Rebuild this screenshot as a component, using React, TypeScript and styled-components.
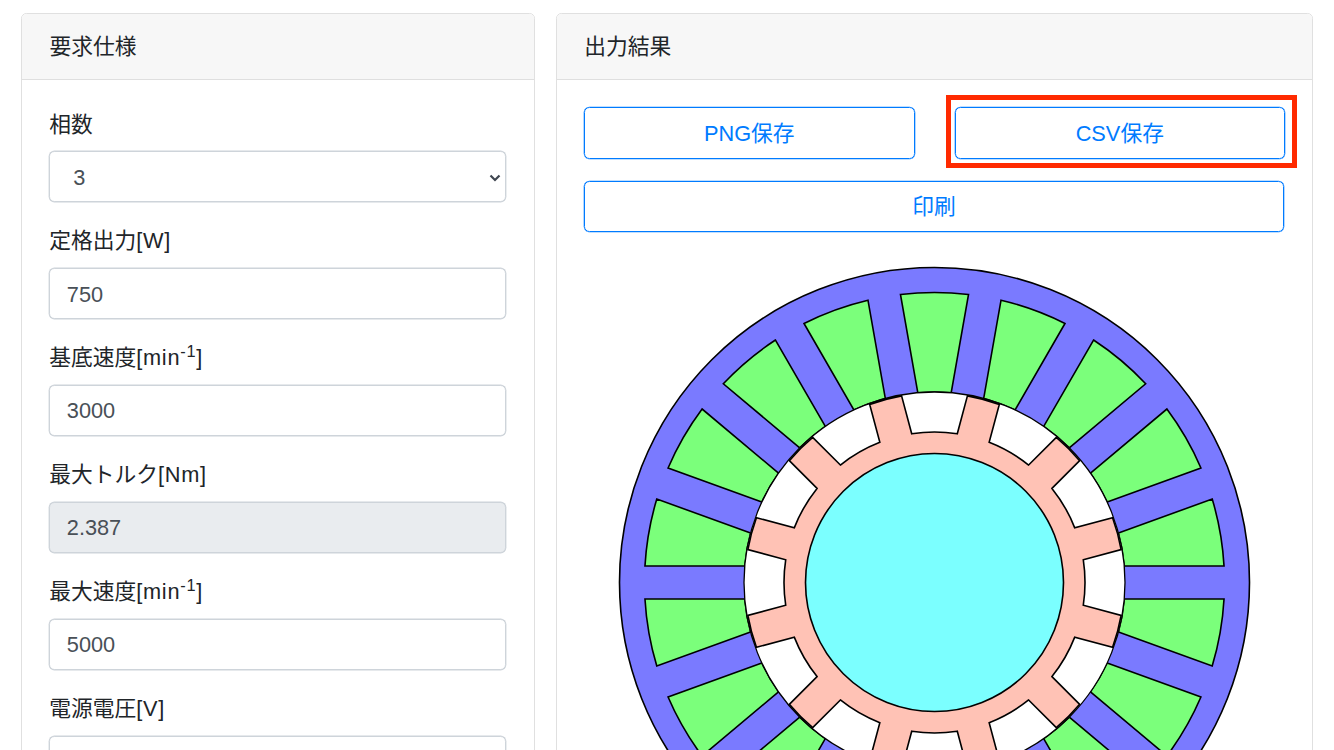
import React from 'react';
import styled, { createGlobalStyle } from 'styled-components';

// motor cross section, sizes in px of the picture
const C = 350.5;
const STATOR_R = 315;
const SLOT_R = 290;
const BORE_R = 190.5;
const ROTOR_R = 189.5;
const YOKE_R = 150.5;
const SHAFT_R = 129;
const HALF_TOOTH = 16.5;

const pt = (deg: number, r: number, offset: number) => {
  const a = (deg * Math.PI) / 180;
  const t = Math.sqrt(r * r - offset * offset);
  const x = C + t * Math.cos(a) - offset * Math.sin(a);
  const y = C - t * Math.sin(a) - offset * Math.cos(a);
  return `${x.toFixed(2)} ${y.toFixed(2)}`;
};

const statorSlot = (center: number) => {
  const lo = center - 10;
  const hi = center + 10;
  return [
    `M${pt(lo, BORE_R, HALF_TOOTH)}`,
    `L${pt(lo, SLOT_R, HALF_TOOTH)}`,
    `A${SLOT_R} ${SLOT_R} 0 0 0 ${pt(hi, SLOT_R, -HALF_TOOTH)}`,
    `L${pt(hi, BORE_R, -HALF_TOOTH)}`,
    `A${BORE_R} ${BORE_R} 0 0 1 ${pt(lo, BORE_R, HALF_TOOTH)}Z`,
  ].join(' ');
};

const rotorPath = () => {
  const parts: string[] = [];
  for (let k = 0; k < 12; k++) {
    const pole = 15 + k * 30;
    const next = pole + 30;
    parts.push(k === 0 ? `M${pt(pole, YOKE_R, -HALF_TOOTH)}` : `L${pt(pole, YOKE_R, -HALF_TOOTH)}`);
    parts.push(`L${pt(pole, ROTOR_R, -HALF_TOOTH)}`);
    parts.push(`A${ROTOR_R} ${ROTOR_R} 0 0 0 ${pt(pole, ROTOR_R, HALF_TOOTH)}`);
    parts.push(`L${pt(pole, YOKE_R, HALF_TOOTH)}`);
    parts.push(`A${YOKE_R} ${YOKE_R} 0 0 0 ${pt(next, YOKE_R, -HALF_TOOTH)}`);
  }
  return parts.join(' ') + 'Z';
};

const slots = Array.from({ length: 18 }, (_, i) => 90 + i * 20);

const MotorDrawing = () => (
  <Drawing viewBox="0 0 701 701">
    <circle cx={C} cy={C} r={STATOR_R} fill="#7a7aff" stroke="#000" strokeWidth="1.6" />
    {slots.map((s) => (
      <path key={s} d={statorSlot(s)} fill="#7bff7b" stroke="#000" strokeWidth="1.6" strokeLinejoin="miter" />
    ))}
    <circle cx={C} cy={C} r={BORE_R} fill="#fff" stroke="#000" strokeWidth="1.3" />
    <path d={rotorPath()} fill="#ffc2b5" stroke="#000" strokeWidth="1.6" />
    <circle cx={C} cy={C} r={SHAFT_R} fill="#7bffff" stroke="#000" strokeWidth="1.6" />
  </Drawing>
);

const App = () => {
  return (
    <Page>
      <GlobalStyle />
      <SpecCard>
        <CardHeader>要求仕様</CardHeader>
        <CardBody>
          <FormGroup>
            <Label>相数</Label>
            <SelectBox>
              <Select defaultValue="3">
                <option value="1">1</option>
                <option value="3">3</option>
              </Select>
              <Chevron viewBox="0 0 12 8">
                <path d="M1.5 1.5 6 6l4.5-4.5" fill="none" stroke="#3f4650" strokeWidth="2.2" />
              </Chevron>
            </SelectBox>
          </FormGroup>
          <FormGroup>
            <Label>定格出力<Unit>[W]</Unit></Label>
            <Input defaultValue="750" />
          </FormGroup>
          <FormGroup>
            <Label>基底速度<Unit>[min<sup>-1</sup>]</Unit></Label>
            <Input defaultValue="3000" />
          </FormGroup>
          <FormGroup>
            <Label>最大トルク<Unit>[Nm]</Unit></Label>
            <Input defaultValue="2.387" disabled />
          </FormGroup>
          <FormGroup>
            <Label>最大速度<Unit>[min<sup>-1</sup>]</Unit></Label>
            <Input defaultValue="5000" />
          </FormGroup>
          <FormGroup>
            <Label>電源電圧<Unit>[V]</Unit></Label>
            <Input defaultValue="200" />
          </FormGroup>
        </CardBody>
      </SpecCard>
      <ResultCard>
        <CardHeader>出力結果</CardHeader>
        <CardBody>
          <ButtonRow>
            <OutlineButton>PNG保存</OutlineButton>
            <Marked>
              <OutlineButton>CSV保存</OutlineButton>
              <RedFrame />
            </Marked>
          </ButtonRow>
          <OutlineButton>印刷</OutlineButton>
          <MotorDrawing />
        </CardBody>
      </ResultCard>
    </Page>
  );
};
export default App;

const GlobalStyle = createGlobalStyle`
  html, body {
    margin: 0;
    height: 750px;
    overflow: hidden;
    background: #fff;
  }
  body {
    font-family: "Liberation Sans", "Noto Sans CJK JP", sans-serif;
    font-size: 21.76px;
    line-height: 1.5;
    color: #212529;
  }
  * {
    box-sizing: border-box;
  }
  sup {
    font-size: 75%;
    line-height: 0;
    position: relative;
    top: -0.5em;
    vertical-align: baseline;
  }
`;

const Page = styled.div`
  display: flex;
  align-items: flex-start;
  gap: 21px;
  padding: 13px 21px 0;
  width: 1334px;
`;

const Card = styled.section`
  border: 1px solid #e0e0e0;
  border-radius: 5.4px;
  background: #fff;
  flex: none;
`;

const SpecCard = styled(Card)`
  width: 513.6px;
`;

const ResultCard = styled(Card)`
  width: 757px;
`;

const CardHeader = styled.div`
  padding: 16.9px 27.2px 15.7px 27.6px;
  background: #f7f7f7;
  border-bottom: 1px solid #dfdfdf;
  border-radius: 4.4px 4.4px 0 0;
`;

const CardBody = styled.div`
  padding: 27.2px;
`;

const FormGroup = styled.div`
  margin-bottom: 22.06px;
`;

const Label = styled.label`
  display: block;
  padding-top: 1.1px;
  margin-bottom: 9.78px;
`;

const Unit = styled.span`
  letter-spacing: 0.75px;
`;

const Input = styled.input`
  display: block;
  width: 100%;
  height: 51.4px;
  padding: 2px 16.6px 0;
  font: inherit;
  color: #495057;
  background: #fff;
  border: 1px solid #ced4da;
  border-radius: 5.4px;
  box-shadow: 0 0 0 0.4px #ced4da;
  outline: none;
  &:disabled {
    background: #e9ecef;
    opacity: 1;
    -webkit-text-fill-color: #495057;
  }
`;

const SelectBox = styled.div`
  position: relative;
`;

const Select = styled.select`
  display: block;
  width: 100%;
  height: 51.4px;
  padding: 3px 0 0 23px;
  font: inherit;
  color: #495057;
  background: #fff;
  border: 1px solid #ced4da;
  border-radius: 5.4px;
  box-shadow: 0 0 0 0.4px #ced4da;
  appearance: none;
  outline: none;
`;

const Chevron = styled.svg`
  position: absolute;
  right: 5px;
  top: 23px;
  width: 12px;
  height: 8px;
  pointer-events: none;
`;

const ButtonRow = styled.div`
  display: grid;
  grid-template-columns: 331px 330px;
  column-gap: 40px;
`;

const Marked = styled.div`
  position: relative;
`;

const RedFrame = styled.div`
  position: absolute;
  top: -12px;
  left: -8.5px;
  right: -12.5px;
  height: 73px;
  border: 5px solid #ff2a00;
  pointer-events: none;
`;

const OutlineButton = styled.button`
  display: block;
  width: 100%;
  height: 51.4px;
  margin-bottom: 21.76px;
  padding: 1.5px 0 0;
  font: inherit;
  color: #007bff;
  background: transparent;
  border: 1px solid #007bff;
  border-radius: 5.4px;
  box-shadow: 0 0 0 0.3px #007bff;
  cursor: pointer;
`;

const Drawing = styled.svg`
  display: block;
  width: 701px;
  height: 701px;
  margin-top: -21.86px;
`;
